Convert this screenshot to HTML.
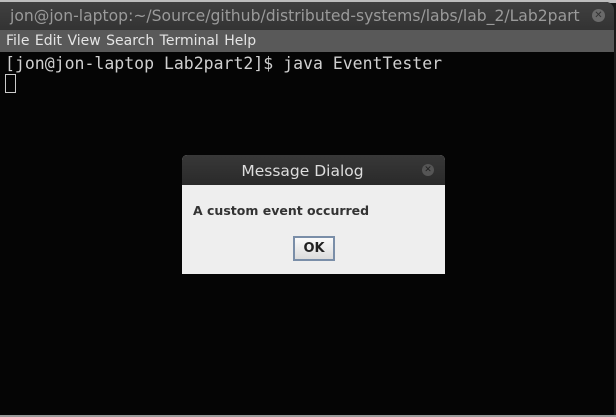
<!DOCTYPE html>
<html><head><style>
body{margin:0;width:616px;height:417px;background:#1a1a1a;position:relative;overflow:hidden;font-family:"DejaVu Sans","Liberation Sans",sans-serif}
.top{position:absolute;left:0;top:0;width:616px;height:3px;background:#bdbdbd}
.win{position:absolute;left:0;top:2px;width:614px;height:413px;background:#050505;border-top-right-radius:8px;overflow:hidden}
.tb{position:absolute;left:0;top:0;width:614px;height:28px;background:linear-gradient(#404040,#333);color:#9a9a9a;font-size:15.6px;line-height:29px;padding-left:10px;box-sizing:border-box;white-space:nowrap}
.x{position:absolute;left:592px;top:7px;width:13px;height:13px;border-radius:50%;background:#6a6a6a;color:#333;font-size:10px;line-height:13px;text-align:center}
.mb{position:absolute;left:0;top:28px;width:614px;height:22px;background:#595959;color:#e4e4e4;font-size:14px;line-height:22px;padding-left:6px;box-sizing:border-box;word-spacing:1px}
.term{position:absolute;left:5px;top:51px;color:#d0d0d0;font-family:"DejaVu Sans Mono","Liberation Mono",monospace;font-size:16.5px;line-height:21px;white-space:pre}
.cur{position:absolute;left:5px;top:72px;width:9px;height:17px;border:1px solid #ccc}
.bot{position:absolute;left:0;top:415px;width:616px;height:2px;background:#9a9a9a}
.dlg{position:absolute;left:182px;top:155px;width:263px;height:119px;background:#eee;border-radius:5px 5px 0 0;overflow:hidden}
.dt{height:30px;background:linear-gradient(#383838,#2a2a2a);color:#ddd;text-align:center;font-size:15.5px;line-height:32px;padding-right:22px}
.dx{position:absolute;left:240px;top:9px;width:12px;height:12px;border-radius:50%;background:#555;color:#222;font-size:9px;line-height:12px;text-align:center}
.msg{position:absolute;left:11px;top:48px;font-size:12.5px;font-weight:bold;color:#333}
.ok{position:absolute;left:111px;top:81px;width:38px;height:21px;border:2px solid #7a8ea8;background:linear-gradient(#fafafa,#dcdcdc);font-size:13px;font-weight:bold;line-height:21px;text-align:center;color:#222}
</style></head><body>
<div class="top"></div>
<div class="win">
<div class="tb">jon@jon-laptop:~/Source/github/distributed-systems/labs/lab_2/Lab2part</div>
<div class="x">✕</div>
<div class="mb">File Edit View Search Terminal Help</div>
<div class="term">[jon@jon-laptop Lab2part2]$ java EventTester</div>
<div class="cur"></div>
</div>
<div class="bot"></div>
<div class="dlg">
<div class="dt">Message Dialog</div>
<div class="dx">✕</div>
<div class="msg">A custom event occurred</div>
<div class="ok">OK</div>
</div>
</body></html>
